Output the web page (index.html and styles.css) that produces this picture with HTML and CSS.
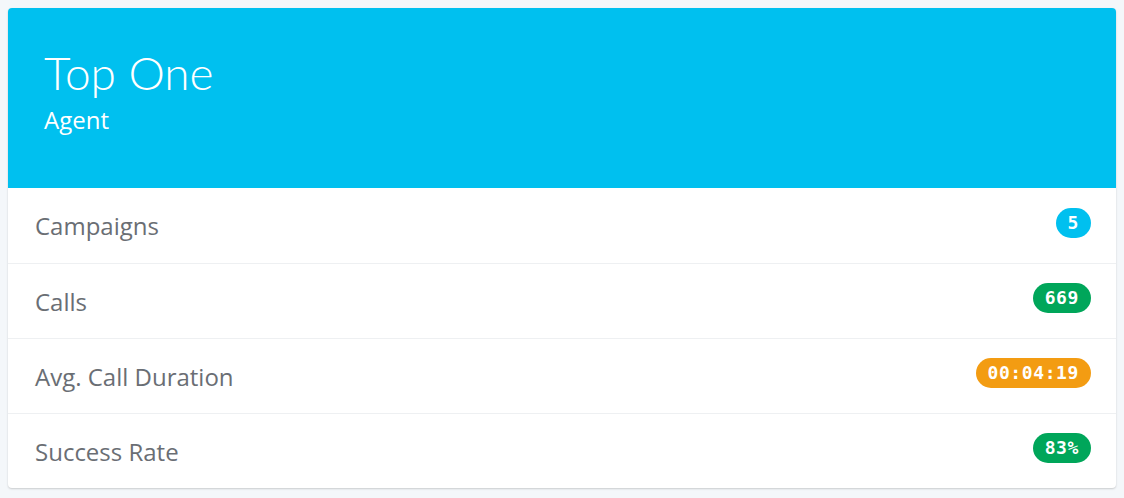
FILE: index.html
```html
<!DOCTYPE html>
<html lang="en">

<head>
    <meta charset="UTF-8">
    <meta name="viewport" content="width=device-width, initial-scale=1.0">
    <title>Top One</title>
    <link rel="stylesheet" href="styles.css">
</head>

<body>
    <div class="card">
        <div class="card-head">
            <h3 class="name">Top One</h3>
            <div class="role">Agent</div>
        </div>
        <ul class="stats">
            <li class="row">
                <span class="label">Campaigns</span>
                <span class="badge blue">5</span>
            </li>
            <li class="row">
                <span class="label">Calls</span>
                <span class="badge green">669</span>
            </li>
            <li class="row">
                <span class="label">Avg. Call Duration</span>
                <span class="badge orange">00:04:19</span>
            </li>
            <li class="row">
                <span class="label">Success Rate</span>
                <span class="badge green">83%</span>
            </li>
        </ul>
    </div>
</body>

</html>
```

FILE: styles.css
```css
html,
body {
    margin: 0;
    padding: 0;
    background: #f4f7fa;
    font-family: "Open Sans", Lato, sans-serif;
}

body {
    padding: 8px;
}

/* card */
.card {
    background: #fff;
    border-radius: 4px;
    overflow: hidden;
    box-shadow: 0 1px 2px rgba(0, 0, 0, 0.18);
}

.card-head {
    background: #00c0ef;
    color: #fff;
    height: 180px;
    padding: 40px 36px 0;
    box-sizing: border-box;
}

.name {
    margin: 0;
    font-family: Lato, sans-serif;
    font-size: 46px;
    font-weight: 300;
    line-height: 50px;
}

.role {
    font-size: 24px;
    line-height: 30px;
    margin-top: 7px;
}

/* list */
.stats {
    list-style: none;
    margin: 0;
    padding: 0;
}

.row {
    display: flex;
    justify-content: space-between;
    align-items: center;
    height: 75px;
    padding: 0 25px 0 27px;
    border-top: 1px solid #eef0f2;
    box-sizing: border-box;
}

.row:first-child {
    border-top: none;
}

.label {
    font-size: 24px;
    color: #6a6e74;
}

.badge {
    font-family: "DejaVu Sans Mono", monospace;
    font-weight: bold;
    font-size: 18px;
    letter-spacing: 0.6px;
    color: #fff;
    height: 30px;
    line-height: 30px;
    padding: 0 12px;
    margin-bottom: 6px;
    border-radius: 15px;
}

.blue {
    background: #00c0ef;
}

.green {
    background: #00a65a;
}

.orange {
    background: #f39c12;
}
```
